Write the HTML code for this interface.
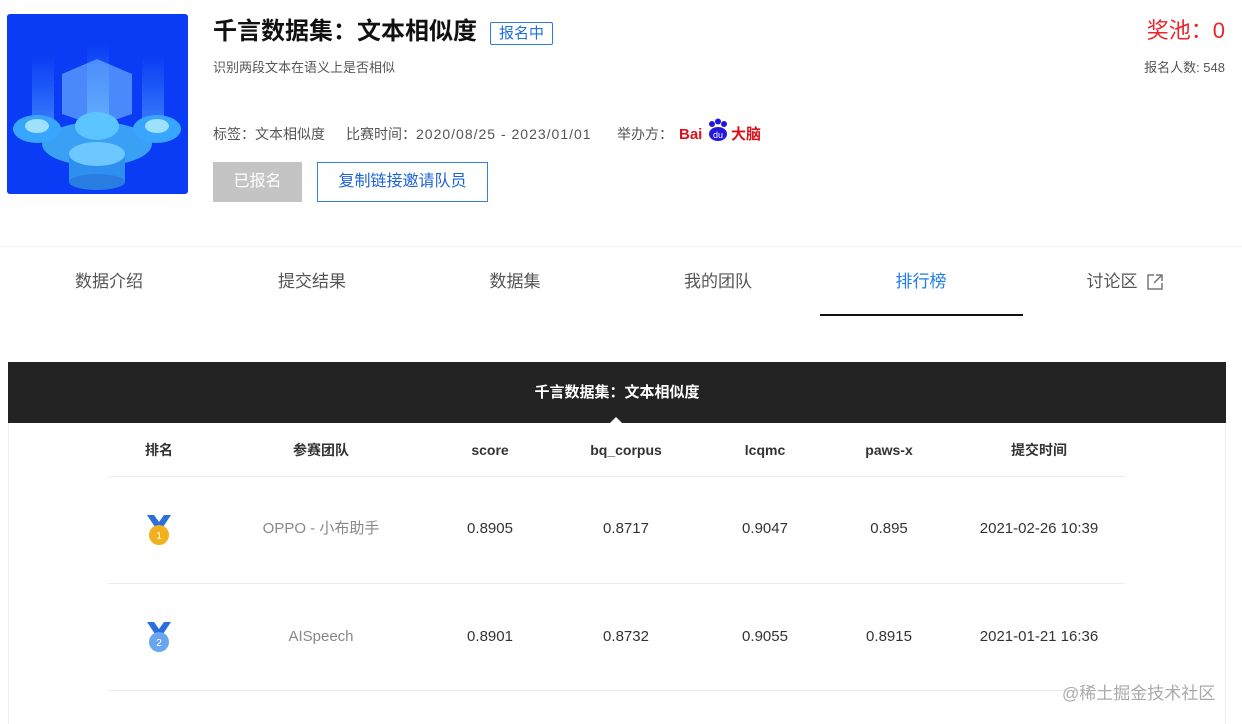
<!DOCTYPE html>
<html><head><meta charset="utf-8"><style>
*{margin:0;padding:0;box-sizing:border-box}
body{width:1242px;height:724px;background:#fff;font-family:"Liberation Sans","Noto Sans CJK SC",sans-serif;position:relative;overflow:hidden;color:#333}
.a{position:absolute;white-space:nowrap}
.th{position:absolute;top:440px;height:20px;line-height:20px;font-size:14px;font-weight:bold;color:#333;transform:translateX(-50%)}
.td{position:absolute;height:20px;line-height:20px;font-size:15px;color:#333;transform:translateX(-50%)}
.line{position:absolute;left:108px;width:1017px;height:1px;background:#ececec}
.tab{position:absolute;top:270px;height:24px;line-height:24px;font-size:17px;color:#555;transform:translateX(-50%)}
.m{font-size:14px;color:#555;height:20px;line-height:20px;top:124px}
</style></head><body>
<div class="a" style="left:7px;top:14px;width:181px;height:180px;background:#0a3cf5;border-radius:3px;overflow:hidden">
<svg width="181" height="180" viewBox="0 0 181 180">
<defs><linearGradient id="g" x1="0" y1="0" x2="0" y2="1"><stop offset="0" stop-color="#5fb8ff" stop-opacity="0"/><stop offset="1" stop-color="#7cd0ff"/></linearGradient></defs>
<rect x="25" y="40" width="22" height="80" fill="url(#g)" opacity=".5"/>
<rect x="135" y="40" width="22" height="80" fill="url(#g)" opacity=".5"/>
<rect x="80" y="30" width="22" height="90" fill="url(#g)" opacity=".6"/>
<path d="M55 60 L90 45 L125 60 L125 100 L90 112 L55 100Z" fill="#7ec8ff" opacity=".55"/>
<ellipse cx="90" cy="130" rx="55" ry="22" fill="#3aa0f5"/>
<ellipse cx="30" cy="115" rx="24" ry="14" fill="#38a6ff"/><ellipse cx="30" cy="112" rx="12" ry="7" fill="#9fe0ff"/>
<ellipse cx="150" cy="115" rx="24" ry="14" fill="#38a6ff"/><ellipse cx="150" cy="112" rx="12" ry="7" fill="#9fe0ff"/>
<ellipse cx="90" cy="112" rx="22" ry="14" fill="#5cc4ff"/>
<rect x="62" y="140" width="56" height="28" fill="#2f8ff0"/><ellipse cx="90" cy="140" rx="28" ry="12" fill="#6cc8ff"/><ellipse cx="90" cy="168" rx="28" ry="8" fill="#2a7de0"/>
</svg></div>
<div class="a" style="left:213px;top:16px;font-size:24px;line-height:32px;font-weight:bold;color:#111">千言数据集：文本相似度</div>
<div class="a" style="left:490px;top:22px;width:63px;height:23px;border:1px solid #2e7be8;border-radius:2px;color:#1e6fe0;font-size:15px;text-align:center;line-height:21px">报名中</div>
<div class="a" style="left:213px;top:58px;font-size:13px;line-height:20px;color:#555">识别两段文本在语义上是否相似</div>
<div class="a m" style="left:213px">标签：文本相似度</div>
<div class="a m" style="left:346px">比赛时间：<span style="letter-spacing:1px">2020/08/25 - 2023/01/01</span></div>
<div class="a m" style="left:617px">举办方：</div>
<div class="a" style="left:679px;top:126px;font-size:15px;line-height:18px;font-weight:bold;color:#d9121b">Bai</div>
<div class="a" style="left:705px;top:118px;width:26px;height:24px"><svg width="26" height="24"><circle cx="7" cy="6" r="3" fill="#2319dc"/><circle cx="13" cy="3.5" r="3" fill="#2319dc"/><circle cx="19" cy="6" r="3" fill="#2319dc"/><ellipse cx="13" cy="16" rx="9" ry="7" fill="#2319dc"/><text x="13" y="20" font-size="9" fill="#fff" text-anchor="middle" font-family="Liberation Sans">du</text></svg></div>
<div class="a" style="left:731px;top:125px;font-size:15px;line-height:20px;font-weight:bold;color:#d9121b">大脑</div>
<div class="a" style="right:17px;top:16px;font-size:22px;line-height:30px;color:#e8262b">奖池：0</div>
<div class="a" style="right:17px;top:58px;font-size:13px;line-height:20px;color:#555">报名人数: 548</div>
<div class="a" style="left:213px;top:162px;width:89px;height:40px;background:#c4c4c4;color:#fff;font-size:16px;text-align:center;line-height:40px">已报名</div>
<div class="a" style="left:317px;top:162px;width:171px;height:40px;border:1px solid #3a7ee0;color:#1e63d6;font-size:16px;text-align:center;line-height:38px">复制链接邀请队员</div>
<div class="a" style="left:0;top:246px;width:1242px;height:1px;background:#efefef"></div>
<div class="tab" style="left:109px">数据介绍</div>
<div class="tab" style="left:312px">提交结果</div>
<div class="tab" style="left:515px">数据集</div>
<div class="tab" style="left:718px">我的团队</div>
<div class="tab" style="left:921px;color:#1e7bf0">排行榜</div>
<div class="tab" style="left:1112px">讨论区</div>
<div class="a" style="left:1146px;top:273px"><svg width="18" height="18"><path d="M8 2H2v14h14v-6" fill="none" stroke="#777" stroke-width="1.5"/><path d="M10 2h6v6M16 2L8 10" fill="none" stroke="#777" stroke-width="1.5"/></svg></div>
<div class="a" style="left:820px;top:314px;width:203px;height:2px;background:#111"></div>
<div class="a" style="left:8px;top:362px;width:1218px;height:61px;background:#232323"></div>
<div class="a" style="left:8px;top:423px;width:1px;height:301px;background:#eee"></div>
<div class="a" style="left:1225px;top:423px;width:1px;height:301px;background:#eee"></div>
<div class="a" style="left:610px;top:417px;width:0;height:0;border-left:6px solid transparent;border-right:6px solid transparent;border-bottom:6px solid #fff"></div>
<div class="a" style="left:617px;top:382px;line-height:22px;font-size:15px;font-weight:bold;color:#fff;transform:translateX(-50%)">千言数据集：文本相似度</div>
<div class="th" style="left:159px">排名</div>
<div class="th" style="left:321px">参赛团队</div>
<div class="th" style="left:490px">score</div>
<div class="th" style="left:626px">bq_corpus</div>
<div class="th" style="left:765px">lcqmc</div>
<div class="th" style="left:889px">paws-x</div>
<div class="th" style="left:1039px">提交时间</div>
<div class="line" style="top:476px"></div>
<div class="line" style="top:583px"></div>
<div class="line" style="top:690px"></div>
<div class="a" style="left:146px;top:514px"><svg width="26" height="32"><path d="M1 1h7l5 7 5-7h7l-8 12H9z" fill="#2a6fdc"/><circle cx="13" cy="21" r="10" fill="#f2b01e"/><text x="13" y="25" font-size="10" fill="#fff" text-anchor="middle" font-family="Liberation Sans">1</text></svg></div>
<div class="a" style="left:146px;top:621px"><svg width="26" height="32"><path d="M1 1h7l5 7 5-7h7l-8 12H9z" fill="#2a6fdc"/><circle cx="13" cy="21" r="10" fill="#6aa6ef"/><text x="13" y="25" font-size="10" fill="#fff" text-anchor="middle" font-family="Liberation Sans">2</text></svg></div>
<div class="td" style="left:321px;top:519px;color:#888">OPPO - 小布助手</div>
<div class="td" style="left:490px;top:519px">0.8905</div>
<div class="td" style="left:626px;top:519px">0.8717</div>
<div class="td" style="left:765px;top:519px">0.9047</div>
<div class="td" style="left:889px;top:519px">0.895</div>
<div class="td" style="left:1039px;top:519px">2021-02-26 10:39</div>
<div class="td" style="left:321px;top:627px;color:#888">AISpeech</div>
<div class="td" style="left:490px;top:627px">0.8901</div>
<div class="td" style="left:626px;top:627px">0.8732</div>
<div class="td" style="left:765px;top:627px">0.9055</div>
<div class="td" style="left:889px;top:627px">0.8915</div>
<div class="td" style="left:1039px;top:627px">2021-01-21 16:36</div>
<div class="a" style="left:1062px;top:682px;font-size:17px;line-height:24px;color:#aaa">@稀土掘金技术社区</div>
</body></html>
